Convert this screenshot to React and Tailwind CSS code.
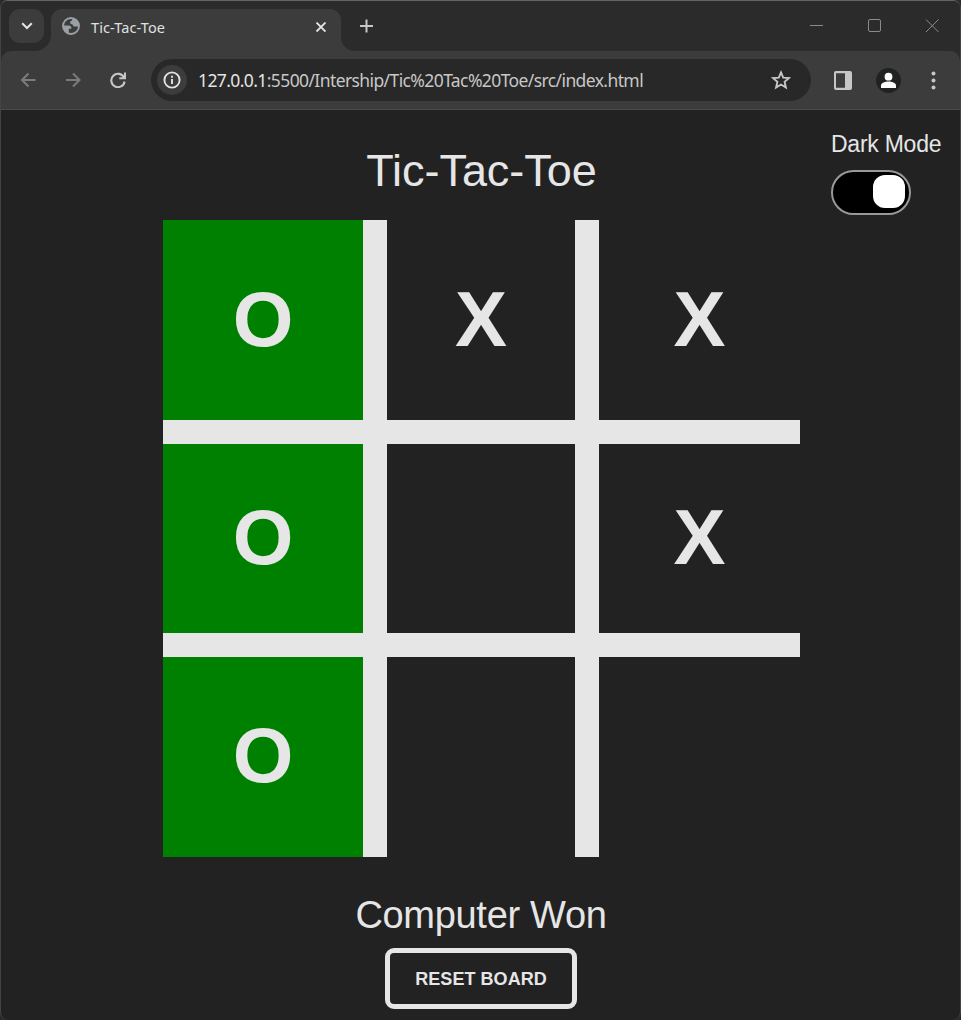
import React from "react";

function TabStrip() {
  return (
    <div className="flex h-[50px] bg-[#2b2b2b]">
      <div className="w-[50px] bg-[#3c3c3c]">
        <div className="h-full rounded-br-[16px] bg-[#2b2b2b] pl-2 pt-2">
          <button className="flex h-[34px] w-[35px] items-center justify-center rounded-[11px] bg-[#3c3c3c]">
            <svg width="12" height="8" viewBox="0 0 12 8" fill="none" stroke="#e3e3e3" strokeWidth="2">
              <path d="M1.200 1.200 6 6l4.800-4.800" />
            </svg>
          </button>
        </div>
      </div>
      <div className="mt-2 flex w-[290px] rounded-t-[11px] bg-[#3c3c3c]">
        <svg className="ml-[10px] mt-[7px] h-[20px] w-[20px]" viewBox="0 0 20 20">
          <circle cx="10" cy="10" r="8" fill="none" stroke="#9aa0a6" strokeWidth="1.900" />
          <path d="M11.500 2c.2 1.900-.6 3-2.300 3.200v1.500c0 1.200 1.300 1.700 2.500 1.700 0 1.300.8 2.200 2.300 2.200h4.200c.1-3.400-1-7.600-6.700-8.600ZM2 9.500h5.200c2.200 0 3.300 1.100 3.300 3.300H7.800v4.900C4 16.700 1.800 13.500 2 9.500Z" fill="#9aa0a6" />
        </svg>
        <span className="ml-[10px] mt-[8px] flex-1 whitespace-nowrap font-['Noto_Sans',sans-serif] text-[14.500px] leading-[20px] tracking-[0.100px] text-[#e0e0e0]">
          Tic-Tac-Toe
        </span>
        <svg className="mr-[15px] mt-[13px]" width="11" height="11" viewBox="0 0 11 11" stroke="#e3e3e3" strokeWidth="1.800">
          <path d="m1.500.500 9 9M10.500.500l-9 9" />
        </svg>
      </div>
      <div className="flex-1 bg-[#3c3c3c]">
        <div className="flex h-full justify-between rounded-bl-[14px] bg-[#2b2b2b]">
          <svg className="ml-[18px] mt-[18px]" width="15" height="15" viewBox="0 0 15 15" stroke="#c7c7c7" strokeWidth="2">
            <path d="M7.500 .500v13M1 7h13" />
          </svg>
          <div className="mr-[20px] mt-[18px] flex gap-[43px]">
            <svg width="15" height="15" viewBox="0 0 15 15" stroke="#8a8a8a">
              <path d="M1 6.500h13" />
            </svg>
            <svg width="15" height="15" viewBox="0 0 15 15" fill="none" stroke="#8a8a8a">
              <rect x="1.500" y=".500" width="12" height="12" rx="1.500" />
            </svg>
            <svg width="15" height="15" viewBox="0 0 15 15" stroke="#8a8a8a">
              <path d="m1 .500 12.500 12.500M13.500 .500 1 13" />
            </svg>
          </div>
        </div>
      </div>
    </div>
  );
}

function Toolbar() {
  return (
    <div className="bg-[#2b2b2b]">
      <div className="flex h-[59px] items-center rounded-t-[10px] border-b border-[#4b4b4b] bg-[#3c3c3c]">
        <svg className="ml-[19px]" width="16" height="16" viewBox="0 0 16 16" fill="none" stroke="#7c7c7c" strokeWidth="2">
          <path d="M8.500 1.500 2 8l6.500 6.500M2 8H15.500" />
        </svg>
        <svg className="ml-[29px]" width="16" height="16" viewBox="0 0 16 16" fill="none" stroke="#7c7c7c" strokeWidth="2">
          <path d="m8 1.500 6.500 6.500L8 14.500M14.500 8H1" />
        </svg>
        <svg className="ml-[29px]" width="16" height="16" viewBox="0 0 16 16" fill="none" stroke="#c7c7c7" strokeWidth="2.100">
          <path d="M14 5.500A6.700 6.700 0 1 0 14.600 9.500M15 .500v5.700H9.300" />
        </svg>
        <div className="ml-[25px] flex h-[42px] w-[660px] items-center rounded-full bg-[#282828]">
          <span className="ml-[6px] flex h-[30px] w-[30px] items-center justify-center rounded-full bg-[#3c3c3c]">
            <svg width="18" height="18" viewBox="0 0 18 18" fill="none" stroke="#e3e3e3" strokeWidth="1.900">
              <circle cx="9" cy="9" r="7.600" />
              <path d="M9 8v5M9 4.700v2" />
            </svg>
          </span>
          <span className="ml-[11px] flex-1 whitespace-nowrap font-['Noto_Sans',sans-serif] text-[17.500px] leading-[24px] tracking-[-0.600px] text-[#c7c7c7]">
            <span className="text-[#e3e3e3]">127.0.0.1</span>:5500/Intership/Tic%20Tac%20Toe/src/index.html
          </span>
          <svg className="mr-[20px]" width="20" height="20" viewBox="0 0 20 20" fill="none" stroke="#c7c7c7" strokeWidth="1.900">
            <path d="m10 2.400 2.200 5.200 5.700.5-4.300 3.700 1.300 5.700-4.900-3-4.900 3 1.300-5.700L2.100 8.100l5.700-.5Z" />
          </svg>
        </div>
        <svg className="ml-[23px]" width="18" height="19" viewBox="0 0 18 19" fillRule="evenodd" fill="#c7c7c7">
          <path d="M2 0h14a2 2 0 0 1 2 2v15a2 2 0 0 1-2 2H2a2 2 0 0 1-2-2V2a2 2 0 0 1 2-2Zm0 2.200v14.600h9V2.200Z" />
        </svg>
        <svg className="ml-[24px]" width="25" height="25" viewBox="0 0 25 25">
          <circle cx="12.500" cy="12.500" r="12.500" fill="#202121" />
          <circle cx="12.500" cy="8.700" r="3.900" fill="#fff" />
          <path d="M5 20v-2.500c0-2.700 4.500-3.900 7.500-3.900s7.500 1.200 7.500 3.900V20Z" fill="#fff" />
        </svg>
        <svg className="ml-[30px]" width="5" height="19" viewBox="0 0 5 19" fill="#c7c7c7">
          <circle cx="2.500" cy="2.500" r="2" />
          <circle cx="2.500" cy="9.500" r="2" />
          <circle cx="2.500" cy="16.500" r="2" />
        </svg>
      </div>
    </div>
  );
}

const cells = ["O", "X", "X", "O", "", "X", "O", "", ""];
const winning = [0, 3, 6];
const rowPadding = ["pb-[2px]", "pb-[4px]", "pb-[5px]"];

function Board() {
  return (
    <div className="ml-[162px] grid w-[637px] grid-cols-[200px_188px_201px] grid-rows-[200px_189px_200px] gap-[24px] bg-[#e6e6e6]">
      {cells.map((mark, i) => (
        <button
          key={i}
          className={
            "flex items-center justify-center text-[78px] font-bold leading-none " +
            rowPadding[Math.floor(i / 3)] +
            (winning.includes(i) ? " bg-[#008000]" : " bg-[#222222]")
          }
        >
          {mark}
        </button>
      ))}
    </div>
  );
}

export default function App() {
  return (
    <div className="h-[1020px] w-[961px] bg-[#2b2b2b]">
      <div className="flex h-full flex-col overflow-hidden rounded-[8px] border border-b-0 border-[#444444] border-t-[#656565] bg-[#222222] font-['Liberation_Sans',Arial,sans-serif] text-[#e6e6e6]">
        <TabStrip />
        <Toolbar />
        <main className="relative">
          <h1 className="mb-[24px] mt-[35px] h-[51px] pl-[2px] text-center text-[45px] leading-[51px] tracking-[-0.050px]">Tic-Tac-Toe</h1>
          <Board />
          <h2 className="mt-[36px] h-[44px] pl-[1px] text-center text-[38px] leading-[44px] tracking-[-0.300px]">Computer Won</h2>
          <div className="mt-[11px] flex justify-center pl-[1px]">
            <button className="h-[61px] w-[192px] rounded-[9px] border-[5px] border-[#e6e6e6] pt-[2px] text-[18px] font-bold tracking-[0.050px]">
              RESET BOARD
            </button>
          </div>
          <div className="absolute right-[18px] top-[20px] w-[111px]">
            <div className="whitespace-nowrap text-[23px] leading-[28px] tracking-[-0.250px]">Dark Mode</div>
            <div className="mt-[12px] flex h-[45px] w-[80px] items-start justify-end rounded-full border-2 border-[#999999] bg-black pr-[4px] pt-[3px]">
              <div className="h-[33px] w-[32px] rounded-[12px] bg-white" />
            </div>
          </div>
        </main>
      </div>
    </div>
  );
}
